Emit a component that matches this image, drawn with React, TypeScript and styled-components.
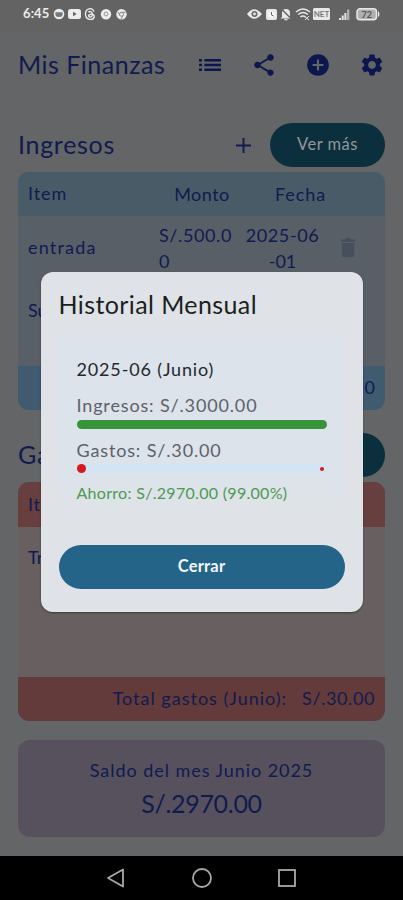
import React from "react";
import styled, { createGlobalStyle } from "styled-components";

const Global = createGlobalStyle`
  * { box-sizing: border-box; }
  body { margin: 0; background: #636566; font-family: Lato, "Open Sans", sans-serif; }
`;

const navy = "#101b50";

const Phone = styled.div`
  position: relative;
  width: 403px;
  height: 900px;
  display: flex;
  flex-direction: column;
  overflow: hidden;
  background: #636566;
  color: ${navy};
`;

const StatusBar = styled.div`
  height: 32px;
  padding: 0 22px 5px 23px;
  display: flex;
  align-items: center;
  justify-content: space-between;
  background: #636363;
  color: #ececec;
`;

const StatusGroup = styled.div<{ $gap: number }>`
  display: flex;
  align-items: center;
  gap: ${(p) => p.$gap}px;
  svg { display: block; }
`;

/* One line of type; $track is the letter spacing. */
const Label = styled.span<{ $size: number; $track?: number; $color?: string; $weight?: number }>`
  font-size: ${(p) => p.$size}px;
  letter-spacing: ${(p) => p.$track ?? 0}px;
  color: ${(p) => p.$color ?? "inherit"};
  font-weight: ${(p) => p.$weight ?? 400};
  line-height: 1.2;
  white-space: nowrap;
`;

const Heading = styled(Label)`
  padding-bottom: 2px;
`;

const AppBar = styled.header`
  height: 65px;
  padding: 0 18px;
  display: flex;
  align-items: center;
  justify-content: space-between;
`;

const Actions = styled.div`
  display: flex;
  align-items: center;
  gap: 28px;
  color: #0b174d;
  svg { display: block; }
  svg:first-child { margin-right: 2px; }
`;

const Content = styled.main`
  flex: 1;
  padding: 26px 18px 0;
  display: flex;
  flex-direction: column;
`;

const SectionHead = styled.div<{ $gap?: number }>`
  height: 44px;
  margin-top: ${(p) => p.$gap ?? 0}px;
  display: flex;
  align-items: center;
`;

const AddButton = styled.button`
  margin-left: auto;
  margin-right: 18px;
  padding: 0;
  border: 0;
  background: none;
  color: ${navy};
  svg { display: block; }
`;

const Pill = styled.button<{ $tone: string; $color: string; $width?: number }>`
  width: ${(p) => (p.$width ? p.$width + "px" : "100%")};
  height: 44px;
  padding: 0;
  border: 0;
  border-radius: 22px;
  display: flex;
  align-items: center;
  justify-content: center;
  font-family: inherit;
  background: ${(p) => p.$tone};
  color: ${(p) => p.$color};
`;

const Table = styled.section<{ $body: string; $height: number }>`
  height: ${(p) => p.$height}px;
  margin-top: 5px;
  border-radius: 11px;
  overflow: hidden;
  display: flex;
  flex-direction: column;
  background: ${(p) => p.$body};
`;

const Row = styled.div<{ $height: number; $tone?: string; $columns?: string }>`
  height: ${(p) => p.$height}px;
  padding: 0 10px;
  display: grid;
  grid-template-columns: ${(p) => p.$columns ?? "131px 86px 75px 1fr"};
  align-items: center;
  background: ${(p) => p.$tone ?? "transparent"};
`;

const Cell = styled.div<{ $align?: string }>`
  display: flex;
  flex-direction: column;
  align-items: ${(p) => p.$align ?? "flex-start"};
  line-height: 1;
  span { line-height: 26px; }
  svg { display: block; }
`;

const Total = styled.div<{ $tone: string }>`
  height: 44px;
  margin-top: auto;
  padding: 0 10px;
  display: flex;
  align-items: center;
  justify-content: flex-end;
  gap: 15px;
  background: ${(p) => p.$tone};
`;

const Balance = styled.section`
  height: 97px;
  margin-top: 19px;
  padding-top: 20px;
  border-radius: 12px;
  display: flex;
  flex-direction: column;
  align-items: center;
  gap: 6px;
  background: #57515e;
`;

const NavBar = styled.nav`
  height: 44px;
  display: flex;
  align-items: center;
  justify-content: center;
  gap: 63px;
  background: #000;
  svg { display: block; }
`;

const Overlay = styled.div`
  position: absolute;
  inset: 0;
  display: flex;
  justify-content: center;
  align-items: flex-start;
  padding-top: 272px;
`;

const Dialog = styled.div`
  width: 322px;
  height: 340px;
  padding: 17px 18px 23px;
  border-radius: 12px;
  display: flex;
  flex-direction: column;
  background: #dfe3e7;
  box-shadow: 0 1px 2px rgba(0, 0, 0, 0.4);
`;

const MonthPanel = styled.div`
  height: 180px;
  margin-top: 15px;
  padding: 22px 18px 0;
  border-radius: 12px;
  display: flex;
  flex-direction: column;
  background: linear-gradient(#dce3eb 0 75%, #dfe3e7);
`;

const Line = styled.div<{ $height: number; $top?: number }>`
  height: ${(p) => p.$height}px;
  padding-top: ${(p) => p.$top ?? 0}px;
  display: flex;
  align-items: center;
`;

const Track = styled.div<{ $tone: string }>`
  height: 9px;
  border-radius: 5px;
  display: flex;
  align-items: center;
  justify-content: space-between;
  padding-right: 3px;
  background: ${(p) => p.$tone};
`;

const Dot = styled.i<{ $size: number }>`
  width: ${(p) => p.$size}px;
  height: ${(p) => p.$size}px;
  border-radius: 50%;
  background: #d5191d;
`;

const Spacer = styled.div`
  flex: 1;
`;

const ListIcon = () => (
  <svg width="22" height="14" viewBox="0 0 22 14" fill="currentColor">
    <path d="M0 1h3v2.4H0zM5.4 1H22v2.4H5.4zM0 5.8h3v2.4H0zM5.4 5.8H22v2.4H5.4zM0 10.6h3V13H0zM5.4 10.6H22V13H5.4z" />
  </svg>
);

const Material = ({ size, d }: { size: number; d: string }) => (
  <svg width={size} height={size} viewBox="0 0 24 24" fill="currentColor"><path d={d} /></svg>
);

const share = "M18 16.08c-.76 0-1.44.3-1.96.77L8.91 12.7c.05-.23.09-.46.09-.7s-.04-.47-.09-.7l7.05-4.11c.54.5 1.25.81 2.04.81 1.66 0 3-1.34 3-3s-1.34-3-3-3-3 1.34-3 3c0 .24.04.47.09.7L8.04 9.81C7.5 9.31 6.79 9 6 9c-1.66 0-3 1.34-3 3s1.34 3 3 3c.79 0 1.5-.31 2.04-.81l7.12 4.16c-.05.21-.08.43-.08.65 0 1.61 1.31 2.92 2.92 2.92s2.92-1.31 2.92-2.92-1.31-2.92-2.92-2.92z";
const addCircle = "M12 2C6.48 2 2 6.48 2 12s4.48 10 10 10 10-4.48 10-10S17.52 2 12 2zm5 11h-4v4h-2v-4H7v-2h4V7h2v4h4v2z";
const gear = "M19.14 12.94c.04-.3.06-.61.06-.94 0-.32-.02-.64-.07-.94l2.03-1.58c.18-.14.23-.41.12-.61l-1.92-3.32c-.12-.22-.37-.29-.59-.22l-2.39.96c-.5-.38-1.03-.7-1.62-.94l-.36-2.54c-.04-.24-.24-.41-.48-.41h-3.84c-.24 0-.43.17-.47.41l-.36 2.54c-.59.24-1.13.57-1.62.94l-2.39-.96c-.22-.08-.47 0-.59.22L2.74 8.87c-.12.21-.08.47.12.61l2.03 1.58c-.05.3-.09.63-.09.94s.02.64.07.94l-2.03 1.58c-.18.14-.23.41-.12.61l1.92 3.32c.12.22.37.29.59.22l2.39-.96c.5.38 1.03.7 1.62.94l.36 2.54c.05.24.24.41.48.41h3.84c.24 0 .44-.17.47-.41l.36-2.54c.59-.24 1.13-.56 1.62-.94l2.39.96c.22.08.47 0 .59-.22l1.92-3.32c.12-.22.07-.47-.12-.61l-2.01-1.58zM12 15.6c-1.98 0-3.6-1.62-3.6-3.6s1.62-3.6 3.6-3.6 3.6 1.62 3.6 3.6-1.62 3.6-3.6 3.6z";

const StatusLeft = () => (
  <svg width="74" height="12" viewBox="0 0 74 12" fill="#ececec">
    <circle cx="6" cy="6" r="5.3" /><path d="M2.4 4.2h7.2v2.2a3.6 2.5 0 0 1-7.2 0z" fill="#777" />
    <rect x="15" y="1" width="13" height="10" rx="2.5" /><path d="M20 3.8v4.4L23.8 6z" fill="#666" />
    <g fill="none" stroke="#ececec" strokeWidth="1.4"><path d="M41 3.5C39-1 32.5 0 32.5 6s7 7 8.6 3.4c1.2-4.6-6.1-3.8-5.4-1.3.8 2.2 4.2.8 3.6-2.4-.5-2.8-3-2.4-3.8-1.4" /></g>
    <circle cx="53" cy="6.3" r="5.2" /><circle cx="53" cy="6" r="1.9" fill="none" stroke="#999" strokeWidth="1" />
    <circle cx="68.5" cy="6.3" r="5.2" /><circle cx="68.5" cy="6.3" r="2" fill="none" stroke="#888" strokeWidth="1" /><path d="M68.5 4.3h4.2M66.8 7.3l-2-3.6M70.2 7.3l-2.2 3.8" stroke="#888" strokeWidth="1" fill="none" />
  </svg>
);

const StatusRight = () => (
  <svg width="134" height="14" viewBox="0 0 134 14" fill="#e8e8e8">
    <path d="M0 7q7-9.5 15 0-8 9.5-15 0z" /><circle cx="7.5" cy="7" r="3" fill="#666" /><circle cx="7.5" cy="7" r="1.4" />
    <rect x="19" y="2" width="11" height="11" rx="2" /><circle cx="24.5" cy="7.5" r="3.6" fill="#f5f5f5" /><path d="M24.5 5v3l2 1" stroke="#666" fill="none" />
    <path d="M35 10V6a4 4 0 0 1 8 0v4l1.5 1.5h-11zM37.5 12h3v1.3h-3z" /><path d="M34 1.5l11 11" stroke="#666" strokeWidth="1.5" />
    <path d="M49 5q7-6 14 0M51.2 7.5q5-4 9.6 0M53.4 10q2.6-2 5 0" fill="none" stroke="#e8e8e8" strokeWidth="1.5" /><path d="M57 9l5 4M62 9l-4 4" stroke="#e8e8e8" />
    <rect x="66" y="1" width="17" height="12" rx="1.5" />
    <text x="74.5" y="9.5" fontSize="8" fontWeight="700" textAnchor="middle" fill="#777">NET</text>
    <path d="M92 11h2v2h-2zM94.7 8.5h2V13h-2zM97.4 6h2v7h-2z" /><path d="M100.1 2.5h2.2V13h-2.2z" fill="#b5b5b5" />
    <rect x="110" y="1.8" width="19.5" height="11" rx="3" fill="#b0b0b0" stroke="#e8e8e8" strokeWidth="1.5" /><path d="M131 4q3 3.2 0 6.5z" />
    <text x="119.7" y="10.6" fontSize="9" fontWeight="700" textAnchor="middle" fill="#555">72</text>
  </svg>
);

const Plus = () => (
  <svg width="17" height="17" viewBox="0 0 17 17"><path d="M8.5 1v15M1 8.5h15" stroke="currentColor" strokeWidth="1.9" /></svg>
);

const Trash = () => (
  <svg width="14" height="19" viewBox="0 0 14 19" fill="#474f5d"><path d="M0 1.5h4L5 0h4l1 1.5h4V4H0zM.8 5h12.4v12a2 2 0 0 1-2 2H2.8a2 2 0 0 1-2-2z" /></svg>
);

export default function App() {
  return (
    <>
      <Global />
      <Phone>
        <StatusBar>
          <StatusGroup $gap={4}>
            <Label $size={13} $track={0.1} $weight={700}>6:45</Label>
            <StatusLeft />
          </StatusGroup>
          <StatusGroup $gap={0}><StatusRight /></StatusGroup>
        </StatusBar>

        <AppBar>
          <Heading $size={25} $track={0.5}>Mis Finanzas</Heading>
          <Actions>
            <ListIcon />
            <Material size={26} d={share} />
            <Material size={26} d={addCircle} />
            <Material size={26} d={gear} />
          </Actions>
        </AppBar>

        <Content>
          <SectionHead>
            <Heading $size={25} $track={0.7}>Ingresos</Heading>
            <AddButton aria-label="Agregar ingreso"><Plus /></AddButton>
            <Pill $tone="#0c2f3d" $color="#929799" $width={115}>
              <Label $size={16.5} $track={0.5}>Ver más</Label>
            </Pill>
          </SectionHead>
          <Table $body="#585f67" $height={238}>
            <Row $height={44} $tone="#495b67" $columns="131px 86px 111px 1fr">
              <Label $size={18} $track={0.9}>Item</Label>
              <Cell $align="center"><Label $size={18} $track={0.5}>Monto</Label></Cell>
              <Cell $align="center"><Label $size={18} $track={0.9}>Fecha</Label></Cell>
            </Row>
            <Row $height={63}>
              <Label $size={18} $track={1.2}>entrada</Label>
              <Cell><Label $size={18} $track={0.6}>S/.500.0</Label><Label $size={18}>0</Label></Cell>
              <Cell $align="center"><Label $size={18} $track={0.6}>2025-06</Label><Label $size={18}>-01</Label></Cell>
              <Cell $align="center"><Trash /></Cell>
            </Row>
            <Row $height={63}><Label $size={18}>Su</Label></Row>
            <Total $tone="#405a70"><Label $size={18}>0</Label></Total>
          </Table>

          <SectionHead $gap={23}>
            <Heading $size={25} $track={0.7}>Ga</Heading>
            <AddButton aria-label="Agregar gasto"><Plus /></AddButton>
            <Pill $tone="#0c2f3d" $color="#929799" $width={115} aria-label="Ver más gastos" />
          </SectionHead>
          <Table $body="#675f60" $height={239}>
            <Row $height={45} $tone="#673f3f"><Label $size={18} $track={0.6}>It</Label></Row>
            <Row $height={62}><Label $size={18}>Tr</Label></Row>
            <Total $tone="#633b3a">
              <Label $size={18} $track={1}>Total gastos (Junio):</Label>
              <Label $size={18} $track={0.6}>S/.30.00</Label>
            </Total>
          </Table>

          <Balance>
            <Label $size={18} $track={0.95}>Saldo del mes Junio 2025</Label>
            <Label $size={25} $track={-0.3}>S/.2970.00</Label>
          </Balance>
        </Content>

        <NavBar>
          <svg width="22" height="22" viewBox="0 0 22 22" fill="none" stroke="#a9a9a9" strokeWidth="1.8"><path d="M17 2.5v17L2 11z" strokeLinejoin="round" /></svg>
          <svg width="22" height="22" viewBox="0 0 22 22" fill="none" stroke="#a9a9a9" strokeWidth="1.8"><circle cx="11" cy="11" r="9" /></svg>
          <svg width="22" height="22" viewBox="0 0 22 22" fill="none" stroke="#a9a9a9" strokeWidth="1.8"><rect x="3" y="3" width="16" height="16" /></svg>
        </NavBar>

        <Overlay>
          <Dialog role="dialog">
            <Label $size={25} $track={0.4} $color="#1c1f22">Historial Mensual</Label>
            <MonthPanel>
              <Line $height={28}><Label $size={18} $track={0.85} $color="#25292d">2025-06 (Junio)</Label></Line>
              <Line $height={36} $top={8}><Label $size={18} $track={0.85} $color="#5c6268">Ingresos: S/.3000.00</Label></Line>
              <Track $tone="#37943b" />
              <Line $height={35} $top={9}><Label $size={18} $track={0.85} $color="#5c6268">Gastos: S/.30.00</Label></Line>
              <Track $tone="#d3e5f5"><Dot $size={9} /><Dot $size={4} /></Track>
              <Line $height={39}><Label $size={16} $track={0.3} $color="#4b9b52">Ahorro: S/.2970.00 (99.00%)</Label></Line>
            </MonthPanel>
            <Spacer />
            <Pill $tone="#236488" $color="#f2f7fa"><Label $size={16.5} $track={0.2} $weight={700}>Cerrar</Label></Pill>
          </Dialog>
        </Overlay>
      </Phone>
    </>
  );
}
